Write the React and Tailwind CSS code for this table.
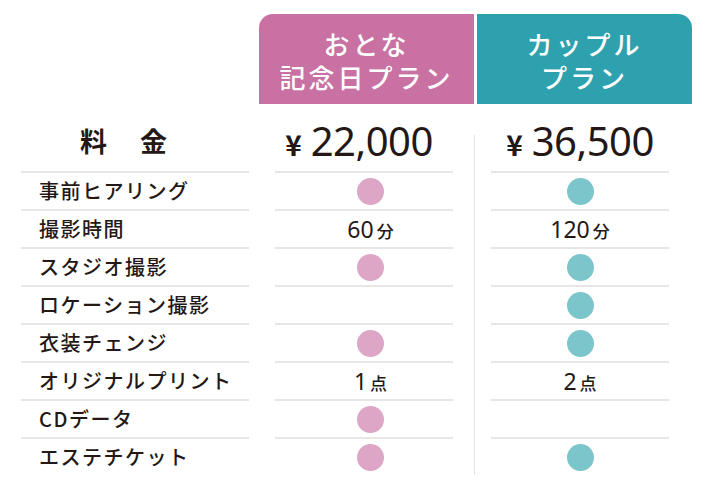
import React from 'react'

const JP = { fontFamily: '"Noto Sans CJK JP", "Noto Sans", sans-serif' }

const rows = [
  { label: '事前ヒアリング', a: 'dot', b: 'dot' },
  { label: '撮影時間', a: ['60', '分'], b: ['120', '分'] },
  { label: 'スタジオ撮影', a: 'dot', b: 'dot' },
  { label: 'ロケーション撮影', a: null, b: 'dot' },
  { label: '衣装チェンジ', a: 'dot', b: 'dot' },
  { label: 'オリジナルプリント', a: ['1', '点'], b: ['2', '点'] },
  { label: 'CDデータ', a: 'dot', b: null },
  { label: 'エステチケット', a: 'dot', b: 'dot' },
]

const Cell = ({ value, color }) => {
  if (value === 'dot') {
    return <div className={`w-[27px] h-[27px] rounded-full ${color}`} />
  }
  if (Array.isArray(value)) {
    return (
      <div className="flex items-baseline text-[#231815]">
        <span className="text-[23px] leading-none" style={{ fontFamily: '"Noto Sans", sans-serif' }}>{value[0]}</span>
        <span className="text-[17px] font-medium leading-none ml-[3px]" style={JP}>{value[1]}</span>
      </div>
    )
  }
  return null
}

const Price = ({ amount }) => (
  <div className="flex items-baseline text-[#231815]">
    <span className="text-[28px] font-bold leading-none mr-[9px]" style={JP}>¥</span>
    <span className="text-[40px] leading-none tracking-[-0.5px]" style={{ fontFamily: '"Noto Sans", sans-serif' }}>{amount}</span>
  </div>
)

const PlanHead = ({ lines, className }) => (
  <div className={`w-[215px] h-[90px] flex flex-col items-center justify-center text-white text-[26px] tracking-[3px] font-medium pt-[2px] ${className}`}>
    {lines.map((line) => (
      <div key={line} className="h-[33px] leading-[33px]">{line}</div>
    ))}
  </div>
)

export default function App() {
  return (
    <div className="w-[712px] h-[485px] bg-white overflow-hidden" style={JP}>
      {/* plan headers */}
      <div className="flex pt-[14px] pl-[259px] gap-[3px]">
        <PlanHead lines={['おとな', '記念日プラン']} className="rounded-tl-[14px] bg-[#c871a2]" />
        <PlanHead lines={['カップル', 'プラン']} className="rounded-tr-[14px] bg-[#2ea1ae]" />
      </div>

      {/* price row */}
      <div className="flex pl-[21px] h-[67px]">
        <div className="w-[228px] flex items-center pl-[59px] pt-[7px]">
          <span className="text-[27px] font-bold tracking-[3px] text-[#231815]">料　金</span>
        </div>
        <div className="ml-[26px] w-[178px] flex items-center justify-center pr-[10px] pt-[7px]">
          <Price amount="22,000" />
        </div>
        <div className="ml-[21px] w-px mt-[31px] bg-[#e3e3e3]" />
        <div className="ml-[16px] w-[178px] flex items-center justify-center pt-[7px]">
          <Price amount="36,500" />
        </div>
      </div>

      {/* feature rows */}
      {rows.map((row) => (
        <div key={row.label} className="flex pl-[21px] h-[38px]">
          <div className="w-[228px] border-t-2 border-[#e6e6e6] flex items-center pl-[18px]">
            <span className="text-[20px] font-medium tracking-[1.5px] text-[#231815]">{row.label}</span>
          </div>
          <div className="ml-[26px] w-[178px] border-t-2 border-[#e6e6e6] flex items-center justify-center pl-[13px]">
            <Cell value={row.a} color="bg-[#dda6c6]" />
          </div>
          <div className="ml-[21px] w-px bg-[#e3e3e3]" />
          <div className="ml-[16px] w-[178px] border-t-2 border-[#e6e6e6] flex items-center justify-center">
            <Cell value={row.b} color="bg-[#7cc5cb]" />
          </div>
        </div>
      ))}
    </div>
  )
}
